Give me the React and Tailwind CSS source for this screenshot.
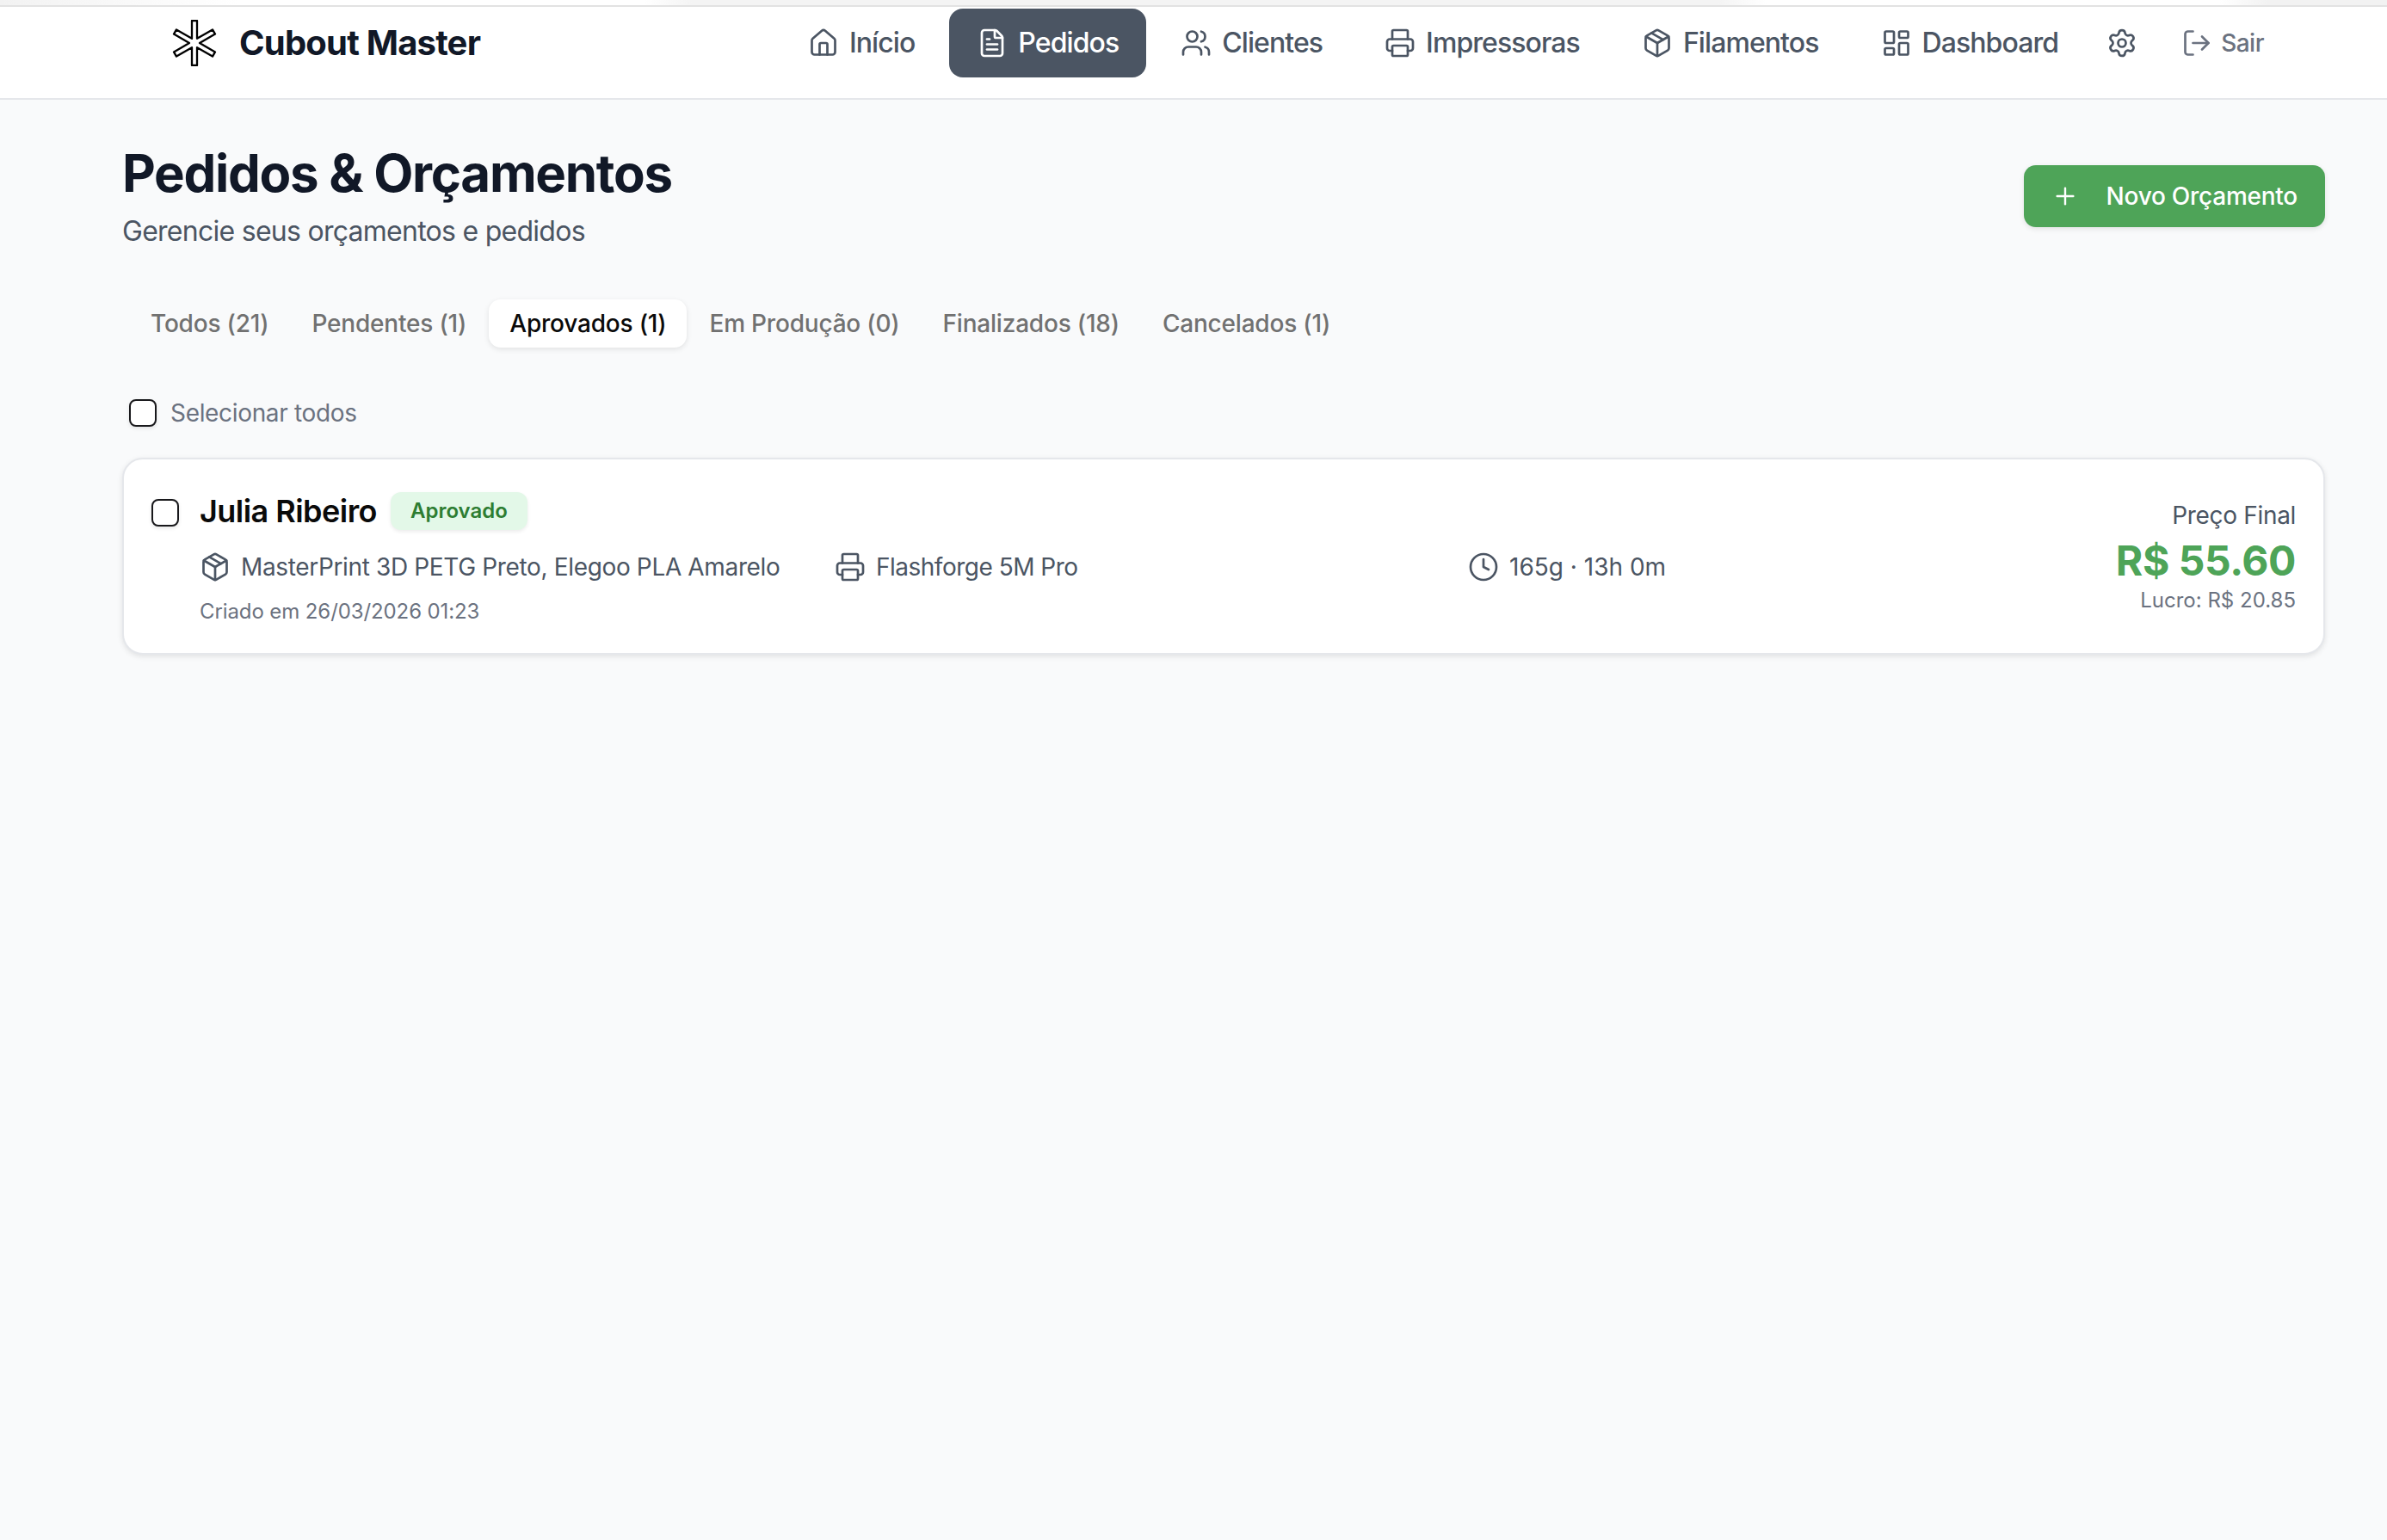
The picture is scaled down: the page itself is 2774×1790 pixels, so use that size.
import { Home, FileText, Users, Printer, Package, LayoutDashboard, Settings, LogOut, Plus, Clock } from "lucide-react";

const navItems = [
  { label: "Início", icon: Home },
  { label: "Pedidos", icon: FileText, active: true },
  { label: "Clientes", icon: Users },
  { label: "Impressoras", icon: Printer },
  { label: "Filamentos", icon: Package },
  { label: "Dashboard", icon: LayoutDashboard },
];

const tabs = [
  { label: "Todos (21)" },
  { label: "Pendentes (1)" },
  { label: "Aprovados (1)", active: true },
  { label: "Em Produção (0)" },
  { label: "Finalizados (18)" },
  { label: "Cancelados (1)" },
];

function LogoMark() {
  return (
    <svg width="54" height="54" viewBox="0 0 54 54" fill="none" stroke="#000" strokeWidth="2.3" strokeLinejoin="round">
      <path d="M24 1h6v20.800L48 11.400l3 5.200L33 27l18 10.400-3 5.200-18-10.400V53h-6V32.200L6 42.600l-3-5.200L21 27 3 16.600l3-5.200 18 10.400z" />
    </svg>
  );
}

function Check() {
  return <div className="w-8 h-8 shrink-0 rounded-lg border-2 border-[#18181b] bg-white shadow-[0_2px_4px_rgba(0,0,0,0.1)]" />;
}

export default function App() {
  return (
    <div className="min-h-[1790px] bg-[#f9fafb] font-['Inter',sans-serif]">
      {/* Top strip */}
      <div className="h-2 bg-[linear-gradient(90deg,#f2f2f2_0%,#ffffff_10%,#ffffff_27%,#f4f4f4_29%,#f4f4f4_72%,#ffffff_74%,#ffffff_93%,#f2f2f2_95%)] border-b-2 border-[#e2e2e2]" />

      {/* Header */}
      <header className="h-[108px] bg-white border-b-2 border-[#e5e7eb] flex items-center pb-[22px] pl-[199px] pr-[116px]">
        <LogoMark />
        <span className="ml-[25px] text-[40px] font-bold tracking-[-0.8px] text-[#111827]">Cubout Master</span>

        <nav className="ml-auto flex items-center gap-2">
          {navItems.map((item) => {
            const Icon = item.icon;
            return (
              <a
                key={item.label}
                className={
                  item.active
                    ? "h-20 px-8 flex items-center gap-3 rounded-2xl bg-[#4b5563] text-white text-[32px] font-medium tracking-[-0.92px]"
                    : "h-20 px-8 flex items-center gap-3 rounded-2xl text-[#4b5563] text-[32px] font-medium tracking-[-0.92px]"
                }
              >
                <Icon size={36} strokeWidth={1.8} />
                {item.label}
              </a>
            );
          })}
          <button className="h-20 px-4 flex items-center text-[#4b5563]">
            <Settings size={36} strokeWidth={1.8} />
          </button>
          <button className="h-20 px-[27px] flex items-center gap-[10px] text-[#6b7280] text-[28px] font-medium tracking-[-0.5px]">
            <LogOut size={36} strokeWidth={1.8} />
            Sair
          </button>
        </nav>
      </header>

      <main className="pl-[142px] pr-[72px]">
        {/* Title row */}
        <div className="flex items-start justify-between pt-[45px]">
          <div>
            <h1 className="text-[60px] leading-[80px] font-bold tracking-[-1.3px] text-[#111827]">Pedidos &amp; Orçamentos</h1>
            <p className="mt-[4px] text-[32px] leading-[48px] tracking-[-0.73px] text-[#4b5563]">Gerencie seus orçamentos e pedidos</p>
          </div>
          <button className="mt-[31px] h-[72px] px-8 flex items-center gap-8 rounded-[14px] bg-[#4ea458] text-white text-[28px] font-medium tracking-[-0.25px] shadow-[0_2px_6px_rgba(0,0,0,0.1)]">
            <Plus size={32} strokeWidth={1.8} />
            Novo Orçamento
          </button>
        </div>

        {/* Tabs */}
        <div className="mt-[55px] flex items-center gap-[2px] pl-[9px]">
          {tabs.map((tab) => (
            <button
              key={tab.label}
              className={
                tab.active
                  ? "h-14 px-6 rounded-[14px] bg-white text-[#0a0a0a] text-[28px] font-medium tracking-[-0.2px] shadow-[0_2px_6px_rgba(0,0,0,0.1)]"
                  : "h-14 px-6 rounded-[14px] text-[#717171] text-[28px] font-medium tracking-[-0.2px]"
              }
            >
              {tab.label}
            </button>
          ))}
        </div>

        {/* Select all */}
        <label className="mt-[55px] flex items-center gap-4 pl-2">
          <Check />
          <span className="text-[28px] tracking-[-0.33px] text-[#6b7280]">Selecionar todos</span>
        </label>

        {/* Order card */}
        <div className="mt-[31px] h-[229px] flex rounded-3xl border-2 border-[#e5e7eb] bg-white shadow-[0_2px_6px_rgba(0,0,0,0.1)] pl-[32px] pr-[32px]">
          <div className="pt-[46px]">
            <Check />
          </div>
          <div className="ml-[24px] flex-1 pt-[36px]">
            <div className="flex items-center gap-4 h-[48px]">
              <span className="text-[36px] font-semibold tracking-[-0.54px] text-[#0a0a0a]">Julia Ribeiro</span>
              <span className="h-[44px] px-[23px] flex items-center rounded-xl bg-[#e3f8e8] text-[#2e7d32] text-[24px] font-semibold shadow-[0_2px_4px_rgba(0,0,0,0.08)]">
                Aprovado
              </span>
            </div>
            <div className="mt-[20px] grid grid-cols-[738px_736px_auto] text-[28px] text-[#4b5563]">
              <div className="flex items-center gap-3 tracking-[-0.35px]">
                <Package size={36} strokeWidth={1.8} />
                MasterPrint 3D PETG Preto, Elegoo PLA Amarelo
              </div>
              <div className="flex items-center gap-3 tracking-[-0.5px]">
                <Printer size={36} strokeWidth={1.8} />
                Flashforge 5M Pro
              </div>
              <div className="flex items-center gap-3">
                <Clock size={36} strokeWidth={1.8} />
                165g · 13h 0m
              </div>
            </div>
            <p className="mt-[13px] text-[24px] tracking-[-0.1px] text-[#6b7280]">Criado em 26/03/2026 01:23</p>
          </div>
          <div className="pt-[45px] flex flex-col items-end">
            <span className="text-[28px] leading-[40px] tracking-[-0.32px] text-[#4b5563]">Preço Final</span>
            <span className="mt-[5px] text-[48px] leading-[56px] font-bold tracking-[-0.45px] text-[#4ea458]">R$ 55.60</span>
            <span className="mt-[2px] text-[24px] leading-[32px] text-[#6b7280]">Lucro: R$ 20.85</span>
          </div>
        </div>
      </main>
    </div>
  );
}
